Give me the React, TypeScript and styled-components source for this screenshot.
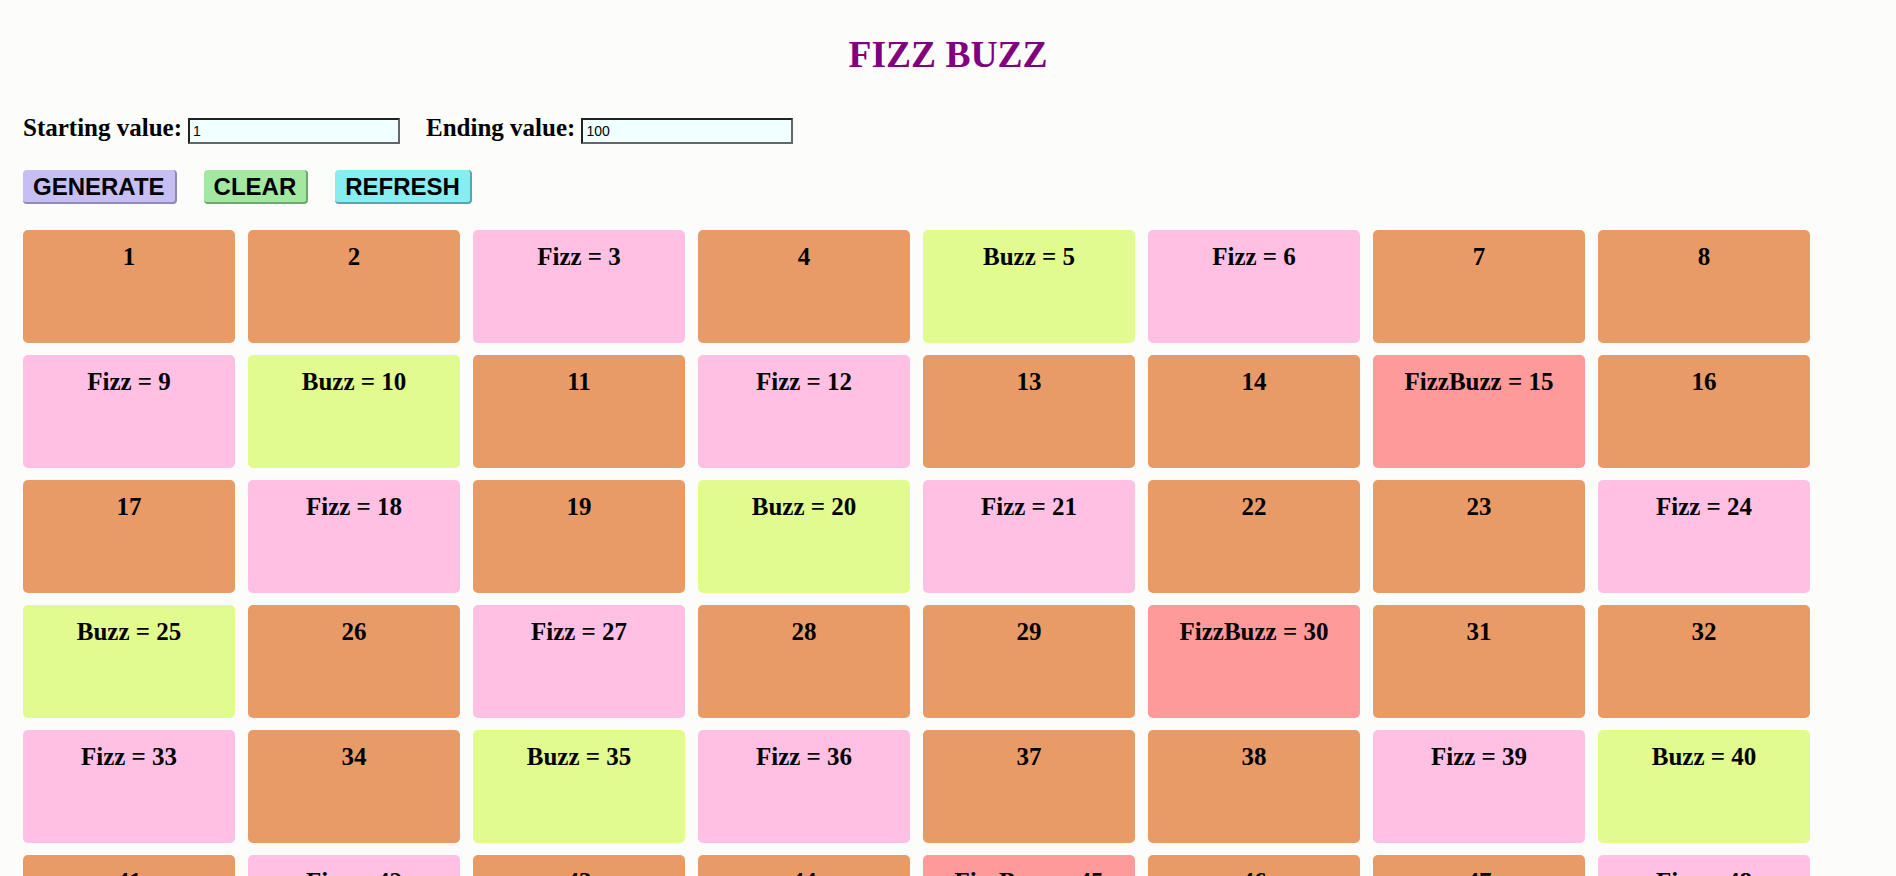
import React from "react";
import styled, { createGlobalStyle } from "styled-components";

const GlobalStyle = createGlobalStyle`
  html, body {
    margin: 0;
    padding: 0;
    background: #fcfcfa;
  }
  body {
    font-family: "Liberation Serif", "Times New Roman", serif;
    color: #000;
  }
`;

const Page = styled.div`
  padding: 0 23px 40px 23px;
`;

const Title = styled.h1`
  margin: 33px 0 0 0;
  font-family: "Liberation Serif", "Times New Roman", serif;
  font-size: 37.5px;
  font-weight: bold;
  color: #800080;
  text-align: center;
  line-height: normal;
`;

const Controls = styled.div`
  display: flex;
  align-items: baseline;
  margin-top: 38px;
`;

const Field = styled.label`
  display: flex;
  align-items: baseline;
  font-family: "Liberation Serif", "Times New Roman", serif;
  font-size: 25px;
  font-weight: bold;
  margin-right: 26px;
`;

const Input = styled.input`
  box-sizing: border-box;
  width: 212px;
  height: 26px;
  margin-left: 6px;
  padding: 3px 3px;
  font-family: "Liberation Sans", Arial, sans-serif;
  font-size: 14px;
  color: #000;
  background: #f0ffff;
  border-style: solid;
  border-width: 2px;
  border-color: #222 #666 #666 #222;
  outline: none;
`;

const Buttons = styled.div`
  display: flex;
  gap: 27px;
  margin-top: 26px;
`;

const Button = styled.button<{ $bg: string; $shade: string }>`
  box-sizing: border-box;
  height: 34px;
  padding: 1px 10px 0 10px;
  font-family: "Liberation Sans", Arial, sans-serif;
  font-size: 24px;
  font-weight: bold;
  line-height: 28px;
  color: #000;
  background: ${(p) => p.$bg};
  border: none;
  border-right: 2px solid ${(p) => p.$shade};
  border-bottom: 2px solid ${(p) => p.$shade};
  border-radius: 4px;
  cursor: pointer;
`;

const Grid = styled.div`
  display: grid;
  grid-template-columns: repeat(8, 212px);
  grid-auto-rows: 113px;
  column-gap: 13px;
  row-gap: 12px;
  margin-top: 26px;
`;

const Card = styled.div<{ $bg: string }>`
  box-sizing: border-box;
  background: ${(p) => p.$bg};
  border-radius: 5px;
  padding-top: 13px;
  text-align: center;
  font-family: "Liberation Serif", "Times New Roman", serif;
  font-size: 25px;
  font-weight: bold;
  line-height: normal;
`;

const colors = {
  plain: "#e99b67",
  fizz: "#ffc0e4",
  buzz: "#e1fb8f",
  fizzbuzz: "#ff9a9a",
};

function label(n: number): { text: string; bg: string } {
  if (n % 15 === 0) return { text: `FizzBuzz = ${n}`, bg: colors.fizzbuzz };
  if (n % 3 === 0) return { text: `Fizz = ${n}`, bg: colors.fizz };
  if (n % 5 === 0) return { text: `Buzz = ${n}`, bg: colors.buzz };
  return { text: String(n), bg: colors.plain };
}

export default function App() {
  const [start, setStart] = React.useState("1");
  const [end, setEnd] = React.useState("100");
  const [items, setItems] = React.useState<number[]>(() =>
    Array.from({ length: 100 }, (_, i) => i + 1)
  );

  const generate = () => {
    const s = parseInt(start, 10);
    const e = parseInt(end, 10);
    if (isNaN(s) || isNaN(e) || e < s) return;
    setItems(Array.from({ length: e - s + 1 }, (_, i) => s + i));
  };

  return (
    <Page>
      <GlobalStyle />
      <Title>FIZZ BUZZ</Title>
      <Controls>
        <Field>
          Starting value:
          <Input value={start} onChange={(e) => setStart(e.target.value)} />
        </Field>
        <Field>
          Ending value:
          <Input value={end} onChange={(e) => setEnd(e.target.value)} />
        </Field>
      </Controls>
      <Buttons>
        <Button $bg="#c7bff4" $shade="#918ab6" onClick={generate}>
          GENERATE
        </Button>
        <Button $bg="#a3e8a0" $shade="#6ea86b" onClick={() => setItems([])}>
          CLEAR
        </Button>
        <Button
          $bg="#86eef0"
          $shade="#56a8aa"
          onClick={() => {
            setStart("1");
            setEnd("100");
            setItems(Array.from({ length: 100 }, (_, i) => i + 1));
          }}
        >
          REFRESH
        </Button>
      </Buttons>
      <Grid>
        {items.map((n) => {
          const l = label(n);
          return (
            <Card key={n} $bg={l.bg}>
              {l.text}
            </Card>
          );
        })}
      </Grid>
    </Page>
  );
}
